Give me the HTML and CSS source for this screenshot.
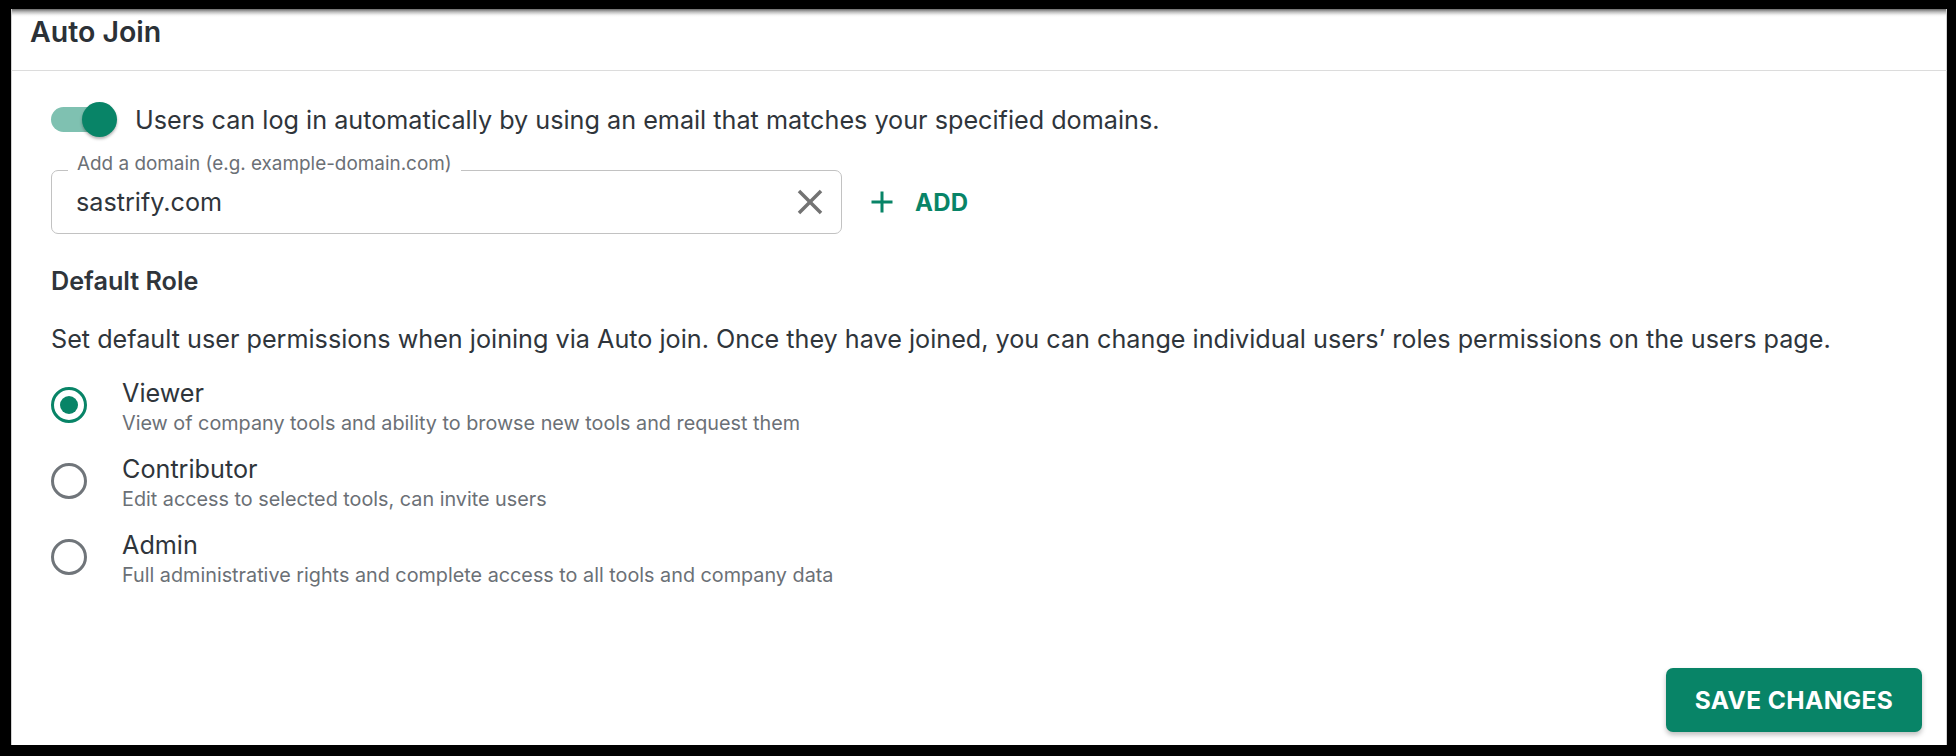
FILE: index.html
```html
<!DOCTYPE html>
<html lang="en">
<head>
<meta charset="utf-8">
<title>Auto Join</title>
<link rel="stylesheet" href="styles.css">
</head>
<body>
<div class="card">
  <header class="card-header">
    <h2 class="card-title">Auto Join</h2>
  </header>
  <div class="card-body">
    <div class="toggle-row">
      <span class="switch"><span class="switch-track"></span><span class="switch-thumb"></span></span>
      <span class="toggle-label">Users can log in automatically by using an email that matches your specified domains.</span>
    </div>
    <div class="domain-row">
      <div class="field">
        <span class="field-label">Add a domain (e.g. example-domain.com)</span>
        <span class="field-value">sastrify.com</span>
        <svg class="clear-icon" viewBox="0 0 24 24" width="42" height="42"><path d="M19 6.41 17.59 5 12 10.59 6.41 5 5 6.41 10.59 12 5 17.59 6.41 19 12 13.41 17.59 19 19 17.59 13.41 12z"/></svg>
      </div>
      <button class="add-btn">
        <svg class="add-icon" viewBox="0 0 24 24" width="36" height="36"><path d="M19 13h-6v6h-2v-6H5v-2h6V5h2v6h6z"/></svg>
        <span>ADD</span>
      </button>
    </div>
    <h3 class="section-title">Default Role</h3>
    <p class="section-desc">Set default user permissions when joining via Auto join. Once they have joined, you can change individual users’ roles permissions on the users page.</p>
    <div class="roles">
      <div class="role">
        <span class="radio checked"></span>
        <div class="role-text">
          <div class="role-title">Viewer</div>
          <div class="role-desc">View of company tools and ability to browse new tools and request them</div>
        </div>
      </div>
      <div class="role">
        <span class="radio"></span>
        <div class="role-text">
          <div class="role-title">Contributor</div>
          <div class="role-desc">Edit access to selected tools, can invite users</div>
        </div>
      </div>
      <div class="role">
        <span class="radio"></span>
        <div class="role-text">
          <div class="role-title">Admin</div>
          <div class="role-desc">Full administrative rights and complete access to all tools and company data</div>
        </div>
      </div>
    </div>
  </div>
  <div class="card-footer">
    <button class="save-btn">SAVE CHANGES</button>
  </div>
</div>
</body>
</html>
```
FILE: styles.css
```css
* { box-sizing: border-box; }

html, body {
  margin: 0;
  padding: 0;
  background: #000;
}

body {
  font-family: Inter, "Noto Sans", sans-serif;
  color: #2f353b;
}

.card {
  margin: 9px 9px 0 11px;
  height: 736px;
  background: linear-gradient(to bottom, #6a6a6a 0, #bdbdbd 3px, #f4f4f4 6px, #fff 8px);
  box-shadow: inset 1px 0 #d2d2d2, inset -1px 0 #d2d2d2;
  display: flex;
  flex-direction: column;
}

.card-header {
  height: 62px;
  padding: 4px 19px 0;
  border-bottom: 1px solid #dcdcdc;
}

.card-title {
  margin: 0;
  font-size: 28.5px;
  line-height: 37px;
  font-weight: 600;
  color: #2b3137;
}

.card-body {
  padding: 31px 25px 0 40px;
}

.toggle-row {
  display: flex;
  align-items: center;
  gap: 18px;
  height: 35px;
}

.switch {
  position: relative;
  width: 66px;
  height: 35px;
  flex: none;
}

.switch-track {
  position: absolute;
  left: 0;
  top: 5px;
  width: 60px;
  height: 25px;
  border-radius: 13px;
  background: #7fc1b1;
}

.switch-thumb {
  position: absolute;
  right: 0;
  top: 0;
  width: 35px;
  height: 35px;
  border-radius: 50%;
  background: #088467;
  box-shadow: 0 2px 3px rgba(0, 0, 0, 0.3);
}

.toggle-label {
  font-size: 25.2px;
  line-height: 30px;
}

.domain-row {
  margin-top: 33px;
  display: flex;
  align-items: center;
}

.field {
  position: relative;
  width: 791px;
  height: 64px;
  border: 1px solid #c2c2c2;
  border-radius: 7px;
  display: flex;
  align-items: center;
  padding: 0 10px 0 24px;
}

.field-label {
  position: absolute;
  left: 16px;
  top: -17px;
  padding: 0 9px;
  background: #fff;
  font-size: 18.9px;
  line-height: 20px;
  color: #6b7076;
}

.field-value {
  flex: 1;
  font-size: 25.2px;
  line-height: 30px;
  color: #2f353b;
}

.clear-icon {
  fill: #737373;
  flex: none;
}

.add-btn {
  margin-left: 22px;
  display: flex;
  align-items: center;
  gap: 15px;
  border: 0;
  background: none;
  padding: 0;
  font-family: inherit;
  font-size: 24px;
  font-weight: 700;
  color: #088467;
  letter-spacing: 0.3px;
}

.add-icon {
  fill: #088467;
}

.section-title {
  margin: 32px 0 0;
  font-size: 25.2px;
  line-height: 30px;
  font-weight: 600;
  color: #2f353b;
}

.section-desc {
  margin: 28px 0 0;
  font-size: 25.2px;
  line-height: 30px;
}

.roles {
  margin-top: 24px;
  display: flex;
  flex-direction: column;
  gap: 17px;
}

.role {
  display: flex;
  align-items: flex-start;
  gap: 35px;
}

.radio {
  margin-top: 9px;
  width: 36px;
  height: 36px;
  flex: none;
  border: 3.5px solid #70757a;
  border-radius: 50%;
  display: flex;
  align-items: center;
  justify-content: center;
}

.radio.checked {
  border-color: #088467;
}

.radio.checked::after {
  content: "";
  width: 18px;
  height: 18px;
  border-radius: 50%;
  background: #088467;
}

.role-title {
  font-size: 25.2px;
  line-height: 30px;
  color: #2f353b;
}

.role-desc {
  margin-top: 1px;
  font-size: 19.8px;
  line-height: 28px;
  color: #6b7076;
}

.card-footer {
  margin-top: auto;
  padding: 0 25px 13px 0;
  display: flex;
  justify-content: flex-end;
}

.save-btn {
  width: 256px;
  height: 64px;
  border: 0;
  border-radius: 7px;
  background: #088467;
  color: #fff;
  font-family: inherit;
  font-size: 24.5px;
  font-weight: 700;
  letter-spacing: 0.4px;
  box-shadow: 0 3px 5px rgba(0, 0, 0, 0.25);
}
```
